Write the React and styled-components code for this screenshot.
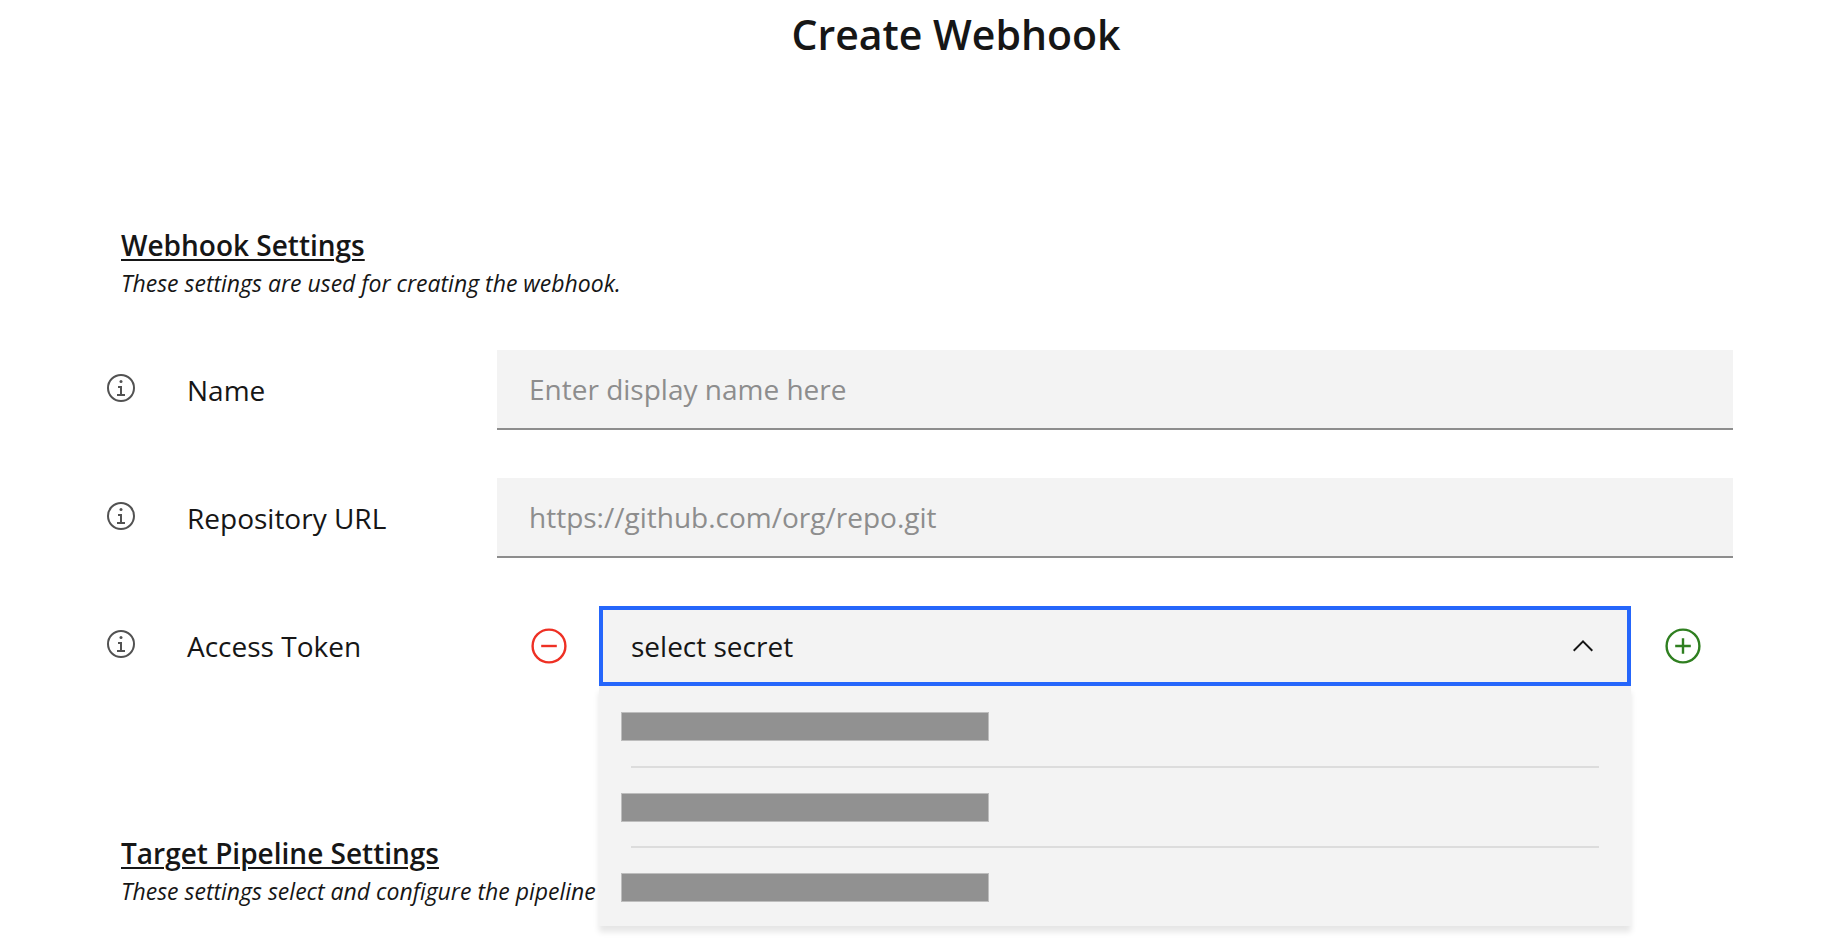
import React, { useState } from 'react';
import styled, { createGlobalStyle } from 'styled-components';

const colors = {
  text: '#161616',
  muted: '#8d8d8d',
  field: '#f3f3f3',
  divider: '#dcdcdc',
  focus: '#2566fb',
  danger: '#ee3024',
  success: '#2f7f20',
  icon: '#525252',
};

const GlobalStyle = createGlobalStyle`
  *, *::before, *::after { box-sizing: border-box; }
  body {
    margin: 0;
    background: #ffffff;
    color: ${colors.text};
    font-family: 'Open Sans', sans-serif;
    font-size: 28px;
    line-height: 36px;
  }
`;

const Page = styled.main`
  min-height: 100vh;
  padding: 6px 0 0 70px;
`;

const Title = styled.h1`
  margin: 0;
  font-size: 41px;
  line-height: 56px;
  font-weight: 600;
  text-align: center;
`;

const Form = styled.form`
  display: flex;
  flex-direction: column;
  gap: 149px;
  padding: 165px 109px 0 35px;
`;

const Section = styled.section`
  display: flex;
  flex-direction: column;
  gap: 51px;
`;

const SectionHeader = styled.header`
  display: flex;
  flex-direction: column;
  gap: 4px;
  padding-left: 16px;
`;

const SectionTitle = styled.h2`
  margin: 0;
  font-size: 28px;
  line-height: 36px;
  font-weight: 600;
  text-decoration: underline;
  text-decoration-thickness: 2px;
  text-underline-offset: 3px;
`;

const SectionHint = styled.p`
  margin: 0;
  font-size: 23px;
  line-height: 32px;
  font-style: italic;
`;

const Fields = styled.div`
  display: flex;
  flex-direction: column;
  gap: 48px;
`;

const Row = styled.div`
  display: grid;
  grid-template-columns: 82px 310px 1fr;
  align-items: center;
`;

const IconButton = styled.button`
  display: flex;
  justify-self: ${(p) => p.$align || 'center'};
  padding: 0;
  border: 0;
  background: none;
  color: ${(p) => colors[p.$tone]};
  cursor: pointer;
`;

const InfoButton = styled(IconButton)`
  padding-bottom: 4px;
`;

const TextInput = styled.input`
  width: 100%;
  height: 80px;
  padding: 0 32px;
  border: 0;
  border-bottom: 2px solid ${colors.muted};
  border-radius: 0;
  outline: none;
  background: ${colors.field};
  color: ${colors.text};
  font: inherit;

  &::placeholder {
    color: ${colors.muted};
    opacity: 1;
  }
`;

const TokenControls = styled.div`
  display: grid;
  grid-template-columns: 102px 1fr 102px;
  align-items: center;
`;

const Dropdown = styled.div`
  position: relative;
`;

const Select = styled.select`
  display: block;
  width: 100%;
  height: 80px;
  padding: 0 80px 0 28px;
  border: 4px solid ${(p) => (p.$open ? colors.focus : colors.field)};
  border-radius: 0;
  outline: none;
  appearance: none;
  background: ${colors.field};
  color: ${colors.text};
  font: inherit;
  cursor: pointer;
`;

const Caret = styled.span`
  position: absolute;
  top: 24px;
  right: 32px;
  display: flex;
  transform: ${(p) => (p.$open ? 'none' : 'rotate(180deg)')};
  pointer-events: none;
`;

const Menu = styled.ul`
  position: absolute;
  z-index: 1;
  top: 100%;
  left: 0;
  right: 0;
  margin: 0;
  padding: 0 32px;
  list-style: none;
  background: ${colors.field};
  box-shadow: 0 6px 6px rgba(0, 0, 0, 0.1);
`;

const Option = styled.li`
  display: flex;
  align-items: center;
  height: 80px;
  cursor: pointer;

  & + & {
    border-top: 2px solid ${colors.divider};
  }
`;

const Redacted = styled.span`
  width: 368px;
  height: 29px;
  margin-left: -10px;
  border: 1px solid #bdbdbd;
  background: #919191;
`;

function InfoIcon() {
  return (
    <svg width="32" height="32" viewBox="0 0 32 32" fill="currentColor" aria-hidden="true">
      <circle cx="16" cy="16" r="13" fill="none" stroke="currentColor" strokeWidth="2" />
      <path d="M17 22v-8h-4v2h2v6h-3v2h8v-2z" />
      <circle cx="16" cy="9.5" r="1.5" />
    </svg>
  );
}

function CircleIcon({ plus }) {
  return (
    <svg width="40" height="40" viewBox="0 0 40 40" fill="none" stroke="currentColor" strokeWidth="2.4" aria-hidden="true">
      <circle cx="21" cy="20" r="16.4" />
      <path d={plus ? 'M13.2 20h15.6M21 12.2v15.6' : 'M13.2 20h15.6'} />
    </svg>
  );
}

function CaretIcon() {
  return (
    <svg width="32" height="32" viewBox="0 0 32 32" fill="currentColor" aria-hidden="true">
      <path d="M16 10l10 10-1.4 1.4-8.6-8.6-8.6 8.6L6 20z" />
    </svg>
  );
}

function Field({ id, label, children }) {
  return (
    <Row>
      <InfoButton type="button" $tone="icon" $align="start" aria-label={`About ${label}`}>
        <InfoIcon />
      </InfoButton>
      <label htmlFor={id}>{label}</label>
      {children}
    </Row>
  );
}

const secrets = ['1', '2', '3'];

function SecretDropdown({ id }) {
  const [open, setOpen] = useState(true);
  const [value, setValue] = useState('');

  const toggle = (event) => {
    event.preventDefault();
    setOpen(!open);
  };

  const choose = (secret) => {
    setValue(secret);
    setOpen(false);
  };

  return (
    <Dropdown>
      <Select id={id} $open={open} value={value} onMouseDown={toggle} onChange={(e) => choose(e.target.value)}>
        <option value="">select secret</option>
        {secrets.map((secret) => (
          <option key={secret} value={secret} aria-label={`Secret ${secret}`} />
        ))}
      </Select>
      <Caret $open={open}>
        <CaretIcon />
      </Caret>
      {open && (
        <Menu role="listbox" aria-label="Secrets">
          {secrets.map((secret) => (
            <Option
              key={secret}
              role="option"
              aria-selected={value === secret}
              aria-label={`Secret ${secret}`}
              onClick={() => choose(secret)}
            >
              <Redacted />
            </Option>
          ))}
        </Menu>
      )}
    </Dropdown>
  );
}

export default function App() {
  return (
    <>
      <GlobalStyle />
      <Page>
        <Title>Create Webhook</Title>
        <Form>
          <Section>
            <SectionHeader>
              <SectionTitle>Webhook Settings</SectionTitle>
              <SectionHint>These settings are used for creating the webhook.</SectionHint>
            </SectionHeader>
            <Fields>
              <Field id="name" label="Name">
                <TextInput id="name" type="text" placeholder="Enter display name here" />
              </Field>
              <Field id="repository" label="Repository URL">
                <TextInput id="repository" type="text" placeholder="https://github.com/org/repo.git" />
              </Field>
              <Field id="token" label="Access Token">
                <TokenControls>
                  <IconButton type="button" $tone="danger" aria-label="Delete secret">
                    <CircleIcon />
                  </IconButton>
                  <SecretDropdown id="token" />
                  <IconButton type="button" $tone="success" aria-label="Add secret">
                    <CircleIcon plus />
                  </IconButton>
                </TokenControls>
              </Field>
            </Fields>
          </Section>
          <Section>
            <SectionHeader>
              <SectionTitle>Target Pipeline Settings</SectionTitle>
              <SectionHint>These settings select and configure the pipeline</SectionHint>
            </SectionHeader>
          </Section>
        </Form>
      </Page>
    </>
  );
}
